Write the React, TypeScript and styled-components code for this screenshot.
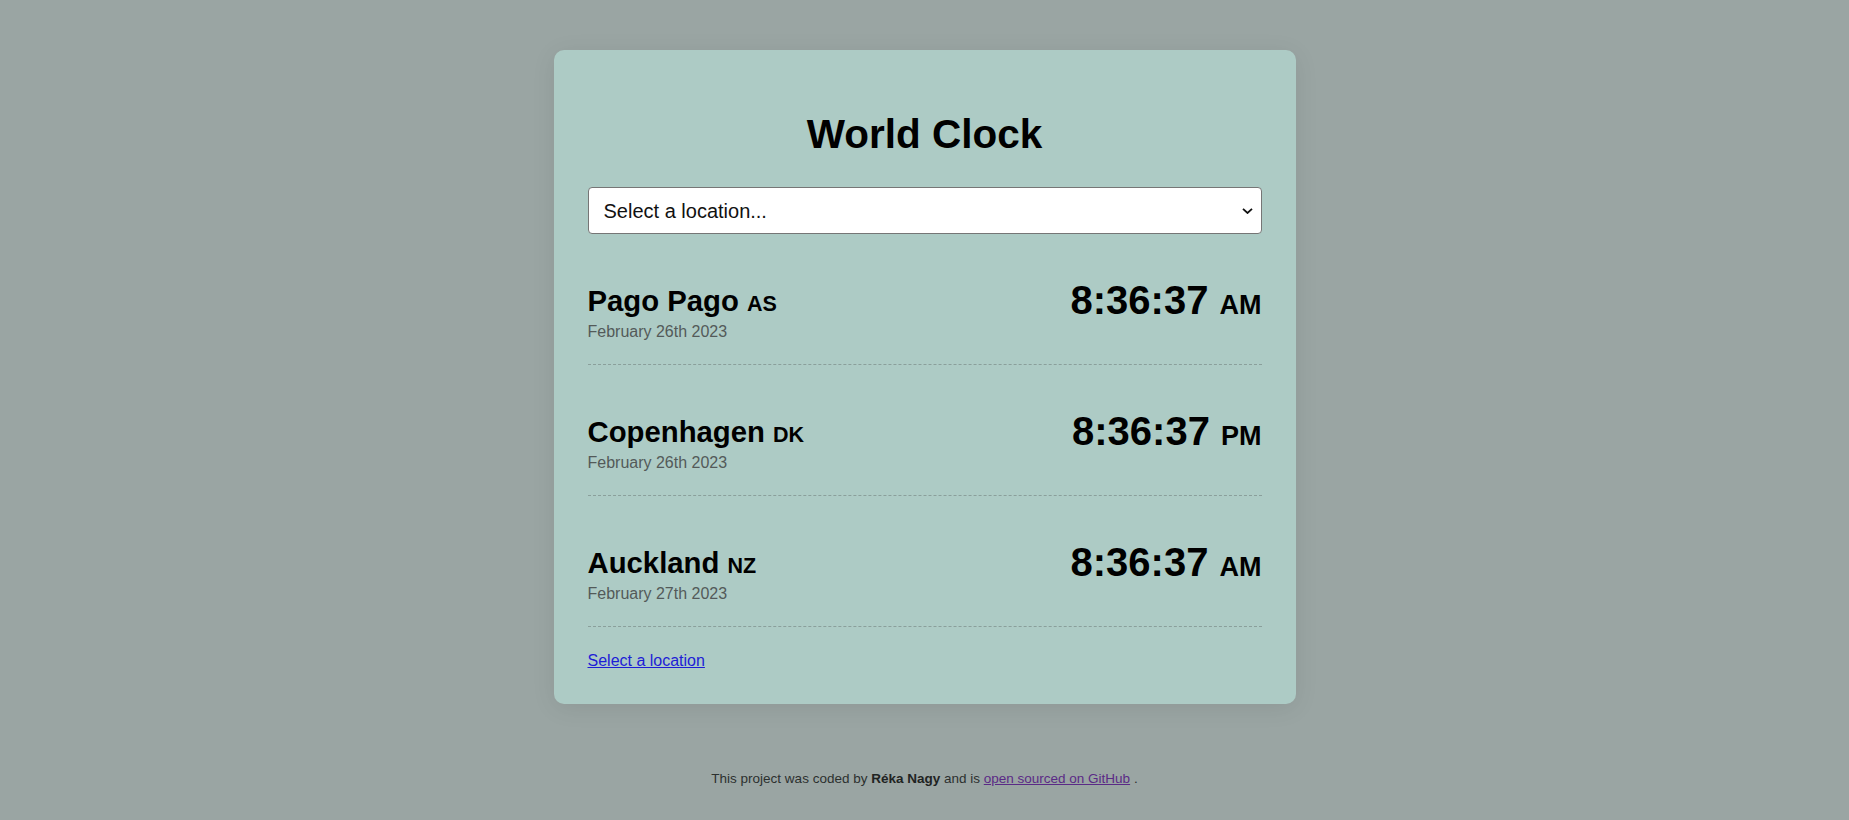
import React from 'react';
import styled, { createGlobalStyle } from 'styled-components';

type City = {
  name: string;
  code: string;
  date: string;
  time: string;
  period: string;
};

const cities: City[] = [
  { name: 'Pago Pago', code: 'AS', date: 'February 26th 2023', time: '8:36:37', period: 'AM' },
  { name: 'Copenhagen', code: 'DK', date: 'February 26th 2023', time: '8:36:37', period: 'PM' },
  { name: 'Auckland', code: 'NZ', date: 'February 27th 2023', time: '8:36:37', period: 'AM' },
];

const App = () => {
  return (
    <>
      <GlobalStyle />
      <Page>
        <Card>
          <Title>World Clock</Title>
          <SelectWrap>
            <LocationSelect defaultValue="">
              <option value="">Select a location...</option>
              <option value="Europe/Copenhagen">Copenhagen</option>
              <option value="Pacific/Auckland">Auckland</option>
              <option value="Pacific/Pago_Pago">Pago Pago</option>
            </LocationSelect>
            <Chevron viewBox="0 0 11 6" width="11" height="6">
              <path d="M1 0.8 L5.5 5 L10 0.8" fill="none" stroke="#111" strokeWidth="1.8" />
            </Chevron>
          </SelectWrap>
          {cities.map((city) => (
            <CityRow key={city.name}>
              <div>
                <CityName>
                  {city.name} <CountryCode>{city.code}</CountryCode>
                </CityName>
                <CityDate>{city.date}</CityDate>
              </div>
              <CityTime>
                {city.time} <Period>{city.period}</Period>
              </CityTime>
            </CityRow>
          ))}
          <ResetLink href="#">Select a location</ResetLink>
        </Card>
        <Footer>
          This project was coded by <strong>Réka Nagy</strong> and is{' '}
          <FooterLink href="#">open sourced on GitHub</FooterLink> .
        </Footer>
      </Page>
    </>
  );
};

export default App;

const GlobalStyle = createGlobalStyle`
  body {
    margin: 0;
    background-color: #9aa5a3;
    font-family: "Liberation Sans", Arial, sans-serif;
  }
`;

const Page = styled.div`
  min-height: 100vh;
  padding-top: 50px;
  box-sizing: border-box;
`;

const Card = styled.div`
  width: 742px;
  box-sizing: border-box;
  margin: 0 auto;
  padding: 61px 34px 34px;
  background-color: #adcbc5;
  border-radius: 10px;
  box-shadow: 0 4px 24px rgba(0, 0, 0, 0.08);
`;

const Title = styled.h1`
  margin: 0;
  font-size: 40.5px;
  line-height: 46px;
  font-weight: bold;
  text-align: center;
  color: #000;
`;

const SelectWrap = styled.div`
  position: relative;
  margin-top: 30px;
`;

const LocationSelect = styled.select`
  display: block;
  width: 100%;
  height: 47px;
  padding: 0 30px 0 15px;
  box-sizing: border-box;
  appearance: none;
  font-family: "Liberation Sans", Arial, sans-serif;
  font-size: 20px;
  color: #111;
  background-color: #fff;
  border: 1px solid #767676;
  border-radius: 4px;
`;

const Chevron = styled.svg`
  position: absolute;
  right: 9px;
  top: 21px;
  pointer-events: none;
`;

const CityRow = styled.div`
  display: flex;
  justify-content: space-between;
  align-items: flex-start;
  padding: 51px 0 23px;
  border-bottom: 1px dashed #8a9f9b;
`;

const CityName = styled.h2`
  margin: 0;
  font-size: 29.3px;
  line-height: 32px;
  font-weight: bold;
  color: #000;
`;

const CountryCode = styled.span`
  font-size: 21.5px;
  line-height: 1;
`;

const CityDate = styled.div`
  margin-top: 6px;
  font-size: 16px;
  line-height: 18px;
  color: #535a59;
`;

const CityTime = styled.div`
  font-size: 40px;
  line-height: 31px;
  font-weight: bold;
  color: #000;
  text-align: right;
`;

const Period = styled.small`
  font-size: 27px;
  line-height: 1;
`;

const ResetLink = styled.a`
  display: inline-block;
  margin-top: 25px;
  font-size: 16px;
  line-height: 18px;
  color: #1d1dd6;
`;

const Footer = styled.p`
  margin: 67px 0 0;
  font-size: 13.5px;
  text-align: center;
  color: #2c302f;

  strong {
    color: #1f2322;
  }
`;

const FooterLink = styled.a`
  color: #5a2a86;
`;
